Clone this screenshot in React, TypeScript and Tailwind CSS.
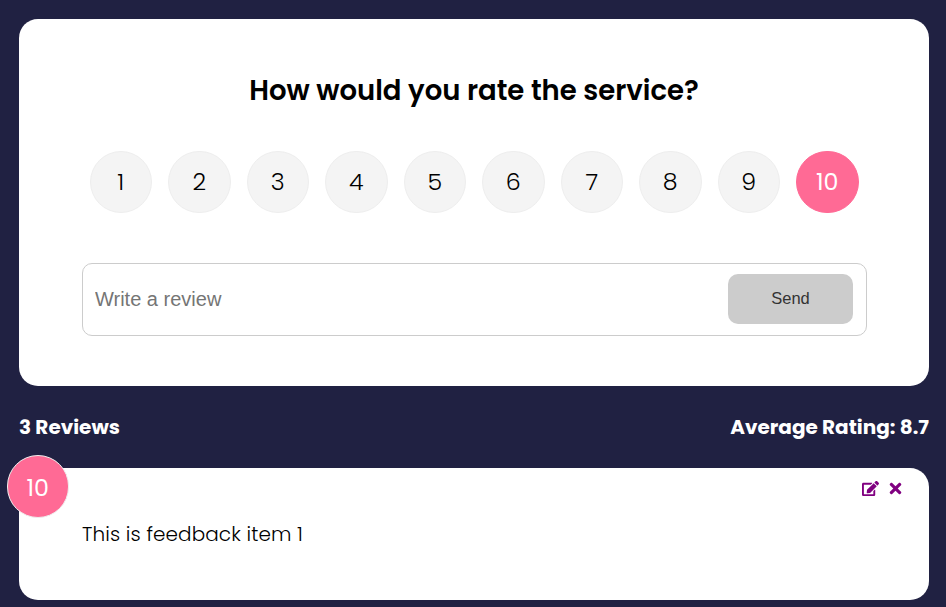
import { useState } from "react";
import { FaEdit, FaTimes } from "react-icons/fa";

const ratings = [1, 2, 3, 4, 5, 6, 7, 8, 9, 10];

export default function App() {
  const [rating, setRating] = useState(10);
  const [text, setText] = useState("");

  return (
    <div className="h-[607px] overflow-hidden bg-[#202142] pl-[19px] pr-[17px] pt-[19px] font-[Poppins,Inter,sans-serif] text-black [font-feature-settings:'cv11']">
      <section className="h-[367px] rounded-[19px] bg-white pl-[63px] pr-[62px] pt-[50px]">
        <h2 className="flex h-[42px] items-center justify-center whitespace-nowrap pr-px pt-[2px] text-[27.5px] font-semibold">
          How would you rate the service?
        </h2>
        <ul className="mt-[39.5px] flex justify-between pl-[7.5px] pr-[8.5px]">
          {ratings.map((n) => (
            <li key={n}>
              <button
                onClick={() => setRating(n)}
                className={`flex size-[62.5px] items-center justify-center rounded-full border pt-px text-[23.75px] ${
                  n === rating
                    ? "border-[#ff6a95] bg-[#ff6a95] text-white"
                    : "border-[#eeeeee] bg-[#f4f4f4] font-light text-black"
                }`}
              >
                {n}
              </button>
            </li>
          ))}
        </ul>
        <div className="mt-[50px] flex h-[73px] items-center rounded-[10px] border border-[#cccccc] pl-[12px] pr-[13px] font-['Liberation_Sans',Arial,sans-serif]">
          <input
            value={text}
            onChange={(e) => setText(e.target.value)}
            placeholder="Write a review"
            className="min-w-0 grow pb-px text-[20px] outline-none placeholder:text-[#757575]"
          />
          <button className="mb-px h-[50px] w-[125px] rounded-[10px] bg-[#cccccc] pb-[2px] text-[16.5px] text-[#333333]">
            Send
          </button>
        </div>
      </section>

      <div className="flex h-[82px] items-center justify-between whitespace-nowrap pb-px text-[20px] font-bold text-white">
        <h4>3 Reviews</h4>
        <h4>Average Rating: 8.7</h4>
      </div>

      <article className="relative h-[132px] rounded-[19px] bg-white pl-[63px] pt-[51px]">
        <div className="absolute -left-[12px] -top-[13px] flex h-[62.5px] w-[61.5px] items-center justify-center rounded-full border border-[#eeeeee] bg-[#ff6a95] pt-[3px] text-[23.75px] text-white">
          10
        </div>
        <div className="absolute right-[25px] top-[12px] flex gap-[8px] text-[17px] text-[#800080]">
          <button aria-label="Edit"><FaEdit /></button>
          <button aria-label="Delete"><FaTimes /></button>
        </div>
        <p className="text-[20px] font-light leading-[30px] tracking-[0.1px]">This is feedback item 1</p>
      </article>
    </div>
  );
}
